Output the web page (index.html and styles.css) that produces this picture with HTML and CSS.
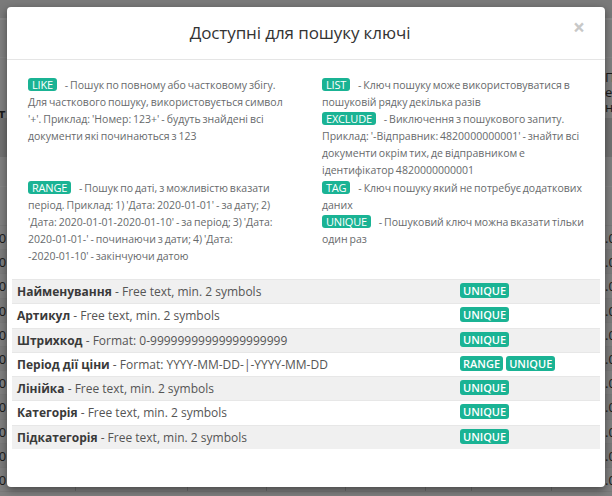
FILE: index.html
```html
<!DOCTYPE html>
<html lang="uk">
<head>
<meta charset="utf-8">
<title>Доступні для пошуку ключі</title>
<link rel="stylesheet" href="styles.css">
</head>
<body>
<div class="page">
  <div class="bg-top"></div>
  <div class="bg-bar"><span class="bg-left">Іт</span><span class="bg-right">П<br>е<br>н</span></div>
  <div class="bg-head"></div>
  <div class="bg-sub"></div>
  <div class="bg-sub2"></div>
  <div class="bg-rows">
    <div class="bg-row"><span class="bg-l">000</span><span class="bg-r">.00</span></div>
    <div class="bg-row alt"><span class="bg-l">000</span><span class="bg-r">.00</span></div>
    <div class="bg-row"><span class="bg-l">000</span><span class="bg-r">.00</span></div>
    <div class="bg-row alt"><span class="bg-l">000</span><span class="bg-r">.00</span></div>
    <div class="bg-row"><span class="bg-l">000</span><span class="bg-r">.00</span></div>
    <div class="bg-row alt"><span class="bg-l">000</span><span class="bg-r">.00</span></div>
    <div class="bg-row"><span class="bg-l">000</span><span class="bg-r">.00</span></div>
    <div class="bg-row alt"><span class="bg-l">000</span><span class="bg-r">.00</span></div>
    <div class="bg-row"><span class="bg-l">000</span><span class="bg-r">.00</span></div>
    <div class="bg-row alt"><span class="bg-l">000</span><span class="bg-r">.00</span></div>
    <div class="bg-row"><span class="bg-l">000</span><span class="bg-r">.00</span></div>
  </div>
</div>

<div class="modal">
  <div class="modal-header">
    <h4 class="modal-title">Доступні для пошуку ключі</h4>
    <span class="close">×</span>
  </div>
  <div class="modal-body">
    <div class="cols">
      <div class="col">
        <p class="key"><span class="badge">LIKE</span> - Пошук по повному або частковому збігу. Для часткового пошуку, використовується символ '+'. Приклад: 'Номер: 123+' - будуть знайдені всі документи які починаються з 123</p>
      </div>
      <div class="col">
        <p class="key"><span class="badge">LIST</span> - Ключ пошуку може використовуватися в пошуковій рядку декілька разів</p>
        <p class="key"><span class="badge">EXCLUDE</span> - Виключення з пошукового запиту. Приклад: '-Відправник: 4820000000001' - знайти всі документи окрім тих, де відправником е ідентифікатор 4820000000001</p>
      </div>
      <div class="col">
        <p class="key"><span class="badge">RANGE</span> - Пошук по даті, з можливістю вказати період. Приклад: 1) 'Дата: 2020-01-01' - за дату; 2) 'Дата: 2020-01-01-2020-01-10' - за період; 3) 'Дата: 2020-01-01-' - починаючи з дати; 4) 'Дата: <span class="nb">-2020-01-10'</span> - закінчуючи датою</p>
      </div>
      <div class="col">
        <p class="key"><span class="badge">TAG</span> - Ключ пошуку який не потребує додаткових даних</p>
        <p class="key"><span class="badge">UNIQUE</span> - Пошуковий ключ можна вказати тільки один раз</p>
      </div>
    </div>

    <div class="keys-table">
      <div class="trow"><div class="cell"><b>Найменування</b> - Free text, min. 2 symbols</div><div class="cell"><span class="tag">UNIQUE</span></div></div>
      <div class="trow"><div class="cell"><b>Артикул</b> - Free text, min. 2 symbols</div><div class="cell"><span class="tag">UNIQUE</span></div></div>
      <div class="trow"><div class="cell"><b>Штрихкод</b> - Format: 0-99999999999999999999</div><div class="cell"><span class="tag">UNIQUE</span></div></div>
      <div class="trow"><div class="cell"><b>Період дії ціни</b> - Format: YYYY-MM-DD-|-YYYY-MM-DD</div><div class="cell"><span class="tag">RANGE</span> <span class="tag">UNIQUE</span></div></div>
      <div class="trow"><div class="cell"><b>Лінійка</b> - Free text, min. 2 symbols</div><div class="cell"><span class="tag">UNIQUE</span></div></div>
      <div class="trow"><div class="cell"><b>Категорія</b> - Free text, min. 2 symbols</div><div class="cell"><span class="tag">UNIQUE</span></div></div>
      <div class="trow"><div class="cell"><b>Підкатегорія</b> - Free text, min. 2 symbols</div><div class="cell"><span class="tag">UNIQUE</span></div></div>
    </div>
  </div>
</div>
</body>
</html>
```

FILE: styles.css
```css
html, body {
  margin: 0;
  padding: 0;
}
body {
  width: 612px;
  height: 496px;
  overflow: hidden;
  background: #808080;
  font-family: "Open Sans", "Noto Sans", sans-serif;
  position: relative;
}

/* dimmed page behind the dialog */
.page {
  display: flex;
  flex-direction: column;
  color: #1a1a1a;
  font-size: 13px;
  height: 496px;
  overflow: hidden;
}
.bg-top {
  height: 18px;
  background: #7a7a7a;
  border-bottom: 2px solid #888;
  flex: none;
}
.bg-bar {
  flex: none;
  height: 60px;
  position: relative;
  border-top: 1px solid #858585;
  margin-top: 37px;
}
.bg-left {
  position: absolute;
  left: -6px;
  top: 46px;
  font-weight: 700;
}
.bg-right {
  position: absolute;
  left: 605px;
  top: 12px;
  line-height: 15px;
}
.bg-head {
  flex: none;
  height: 39px;
  background: #727272;
}
.bg-sub {
  flex: none;
  height: 29px;
  border-bottom: 1px solid #858585;
}
.bg-sub2 {
  flex: none;
  height: 38px;
  border-bottom: 1px solid #7a7a7a;
}
.bg-rows {
  display: flex;
  flex-direction: column;
  flex: none;
}
.bg-row {
  height: 23.2px;
  position: relative;
  border-bottom: 1px solid #7a7a7a;
  background-image: linear-gradient(#6c6c6c, #6c6c6c), linear-gradient(#6c6c6c, #6c6c6c), linear-gradient(#6c6c6c, #6c6c6c), linear-gradient(#6c6c6c, #6c6c6c), linear-gradient(#6c6c6c, #6c6c6c), linear-gradient(#6c6c6c, #6c6c6c), linear-gradient(#6c6c6c, #6c6c6c);
  background-size: 1px 100%;
  background-repeat: no-repeat;
  background-position: 75px 0, 187px 0, 266px 0, 345px 0, 425px 0, 471px 0, 551px 0;
}
.bg-row.alt {
  background-color: #7c7c7c;
}
.bg-l {
  position: absolute;
  left: -16px;
  top: 3px;
}
.bg-r {
  position: absolute;
  left: 605px;
  top: 3px;
}

/* dialog */
.modal {
  position: absolute;
  left: 7px;
  top: 7px;
  width: 598px;
  height: 480px;
  background: #fff;
  border-radius: 4px;
  box-shadow: 0 3px 9px rgba(0, 0, 0, 0.45);
  display: flex;
  flex-direction: column;
}
.modal-header {
  height: 52px;
  padding-right: 12px;
  border-bottom: 1px solid #e5e5e5;
  display: flex;
  align-items: center;
  justify-content: center;
  position: relative;
}
.modal-title {
  margin: 0;
  font-size: 17px;
  letter-spacing: -0.1px;
  font-weight: 500;
  color: #333;
  line-height: 20px;
}
.close {
  position: absolute;
  right: 20px;
  top: 10px;
  font-size: 21px;
  font-weight: 700;
  color: #c8c8c8;
  line-height: 20px;
}
.modal-body {
  padding: 16.5px 5px 0;
}
.cols {
  display: grid;
  grid-template-columns: 1fr 1fr;
  row-gap: 1px;
}
.col {
  padding: 0 16px;
}
.key {
  margin: 0;
  font-size: 10.5px;
  word-spacing: -0.8px;
  line-height: 17px;
  color: #676a6c;
}
.nb {
  white-space: nowrap;
}
.badge {
  display: inline-block;
  background: #1ab394;
  color: #fff;
  font-size: 11px;
  letter-spacing: -0.2px;
  word-spacing: 0;
  line-height: 13.5px;
  padding: 0 4px;
  border-radius: 3px;
  margin-right: 6px;
}

.keys-table {
  margin-top: 14.5px;
  display: flex;
  flex-direction: column;
}
.trow {
  display: grid;
  grid-template-columns: 443px 1fr;
  border-top: 1px solid #e7e7e7;
}
.trow:nth-child(odd) {
  background: #f0f0f0;
}
.cell {
  padding: 3px 5px;
  line-height: 17.3px;
  font-size: 12px;
  color: #555;
  white-space: nowrap;
}
.cell b {
  color: #3a3a3a;
  font-weight: 700;
}
.tag {
  display: inline-block;
  background: #1ab394;
  color: #fff;
  font-size: 11px;
  font-weight: 600;
  line-height: 15px;
  padding: 0 3px;
  border-radius: 3px;
  vertical-align: 1px;
}
```
